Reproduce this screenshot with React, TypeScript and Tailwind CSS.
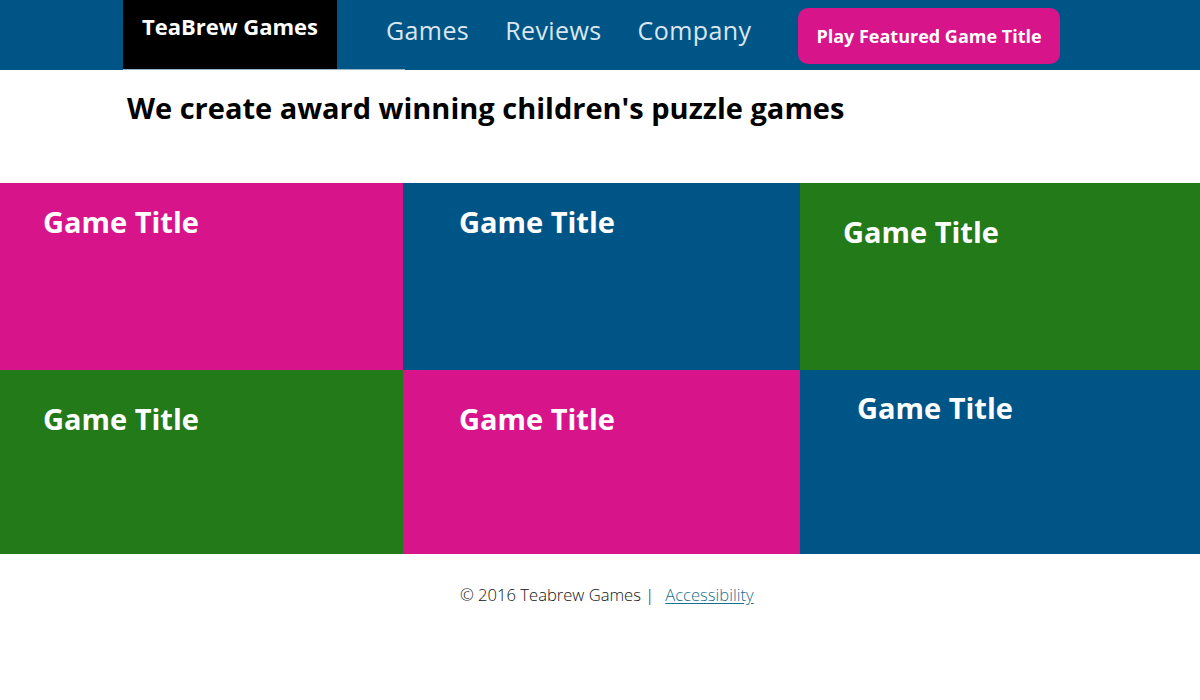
import React from "react";

const tiles = [
  { bg: "bg-[#d8148a]", cls: "pl-[43px] pt-[21px]" },
  { bg: "bg-[#005587]", cls: "pl-[56px] pt-[21px]" },
  { bg: "bg-[#227a19]", cls: "pl-[43px] pt-[31px]" },
  { bg: "bg-[#227a19]", cls: "pl-[43px] pt-[31px]" },
  { bg: "bg-[#d8148a]", cls: "pl-[56px] pt-[31px]" },
  { bg: "bg-[#005587]", cls: "pl-[57px] pt-[20px]" },
];

export default function App() {
  return (
    <div className="w-[1200px] h-[700px] bg-white font-['Open_Sans','Noto_Sans',sans-serif]">
      <header className="h-[70px] bg-[#005587] flex items-stretch relative">
        <div className="ml-[123px] w-[214px] h-[69px] bg-black flex items-start justify-center pt-[10px]">
          <span className="text-white font-bold text-[22px]">TeaBrew Games</span>
        </div>
        <nav className="w-[461px] flex items-start pt-[12px] pl-[49px] gap-[36px] text-[25px] tracking-[0.4px] text-[#dbe6ef]">
          <a>Games</a>
          <a>Reviews</a>
          <a>Company</a>
        </nav>
        <div className="pt-[8px]">
          <button className="w-[262px] h-[56px] rounded-[10px] bg-[#d8148a] text-white font-bold text-[18px]">
            Play Featured Game Title
          </button>
        </div>
        <div className="absolute left-[123px] top-[69px] w-[282px] h-[1px] bg-[#9bb4c8]" />
      </header>
      <div className="h-[113px] pl-[127px] pt-[19px]">
        <h1 className="text-[29px] font-bold text-black leading-[38px]">
          We create award winning children's puzzle games
        </h1>
      </div>
      <div className="grid grid-cols-[403px_397px_400px] grid-rows-[187px_184px]">
        {tiles.map((t, i) => (
          <div key={i} className={`${t.bg} ${t.cls}`}>
            <h2 className="text-white font-bold text-[29px] leading-[36px]">Game Title</h2>
          </div>
        ))}
      </div>
      <footer className="flex pt-[29px] pl-[460px] text-[16.6px] font-light text-[#111]">
        <span>© 2016 Teabrew Games |</span>
        <a className="ml-[11px] text-[#17708f] underline underline-offset-2">Accessibility</a>
      </footer>
    </div>
  );
}
